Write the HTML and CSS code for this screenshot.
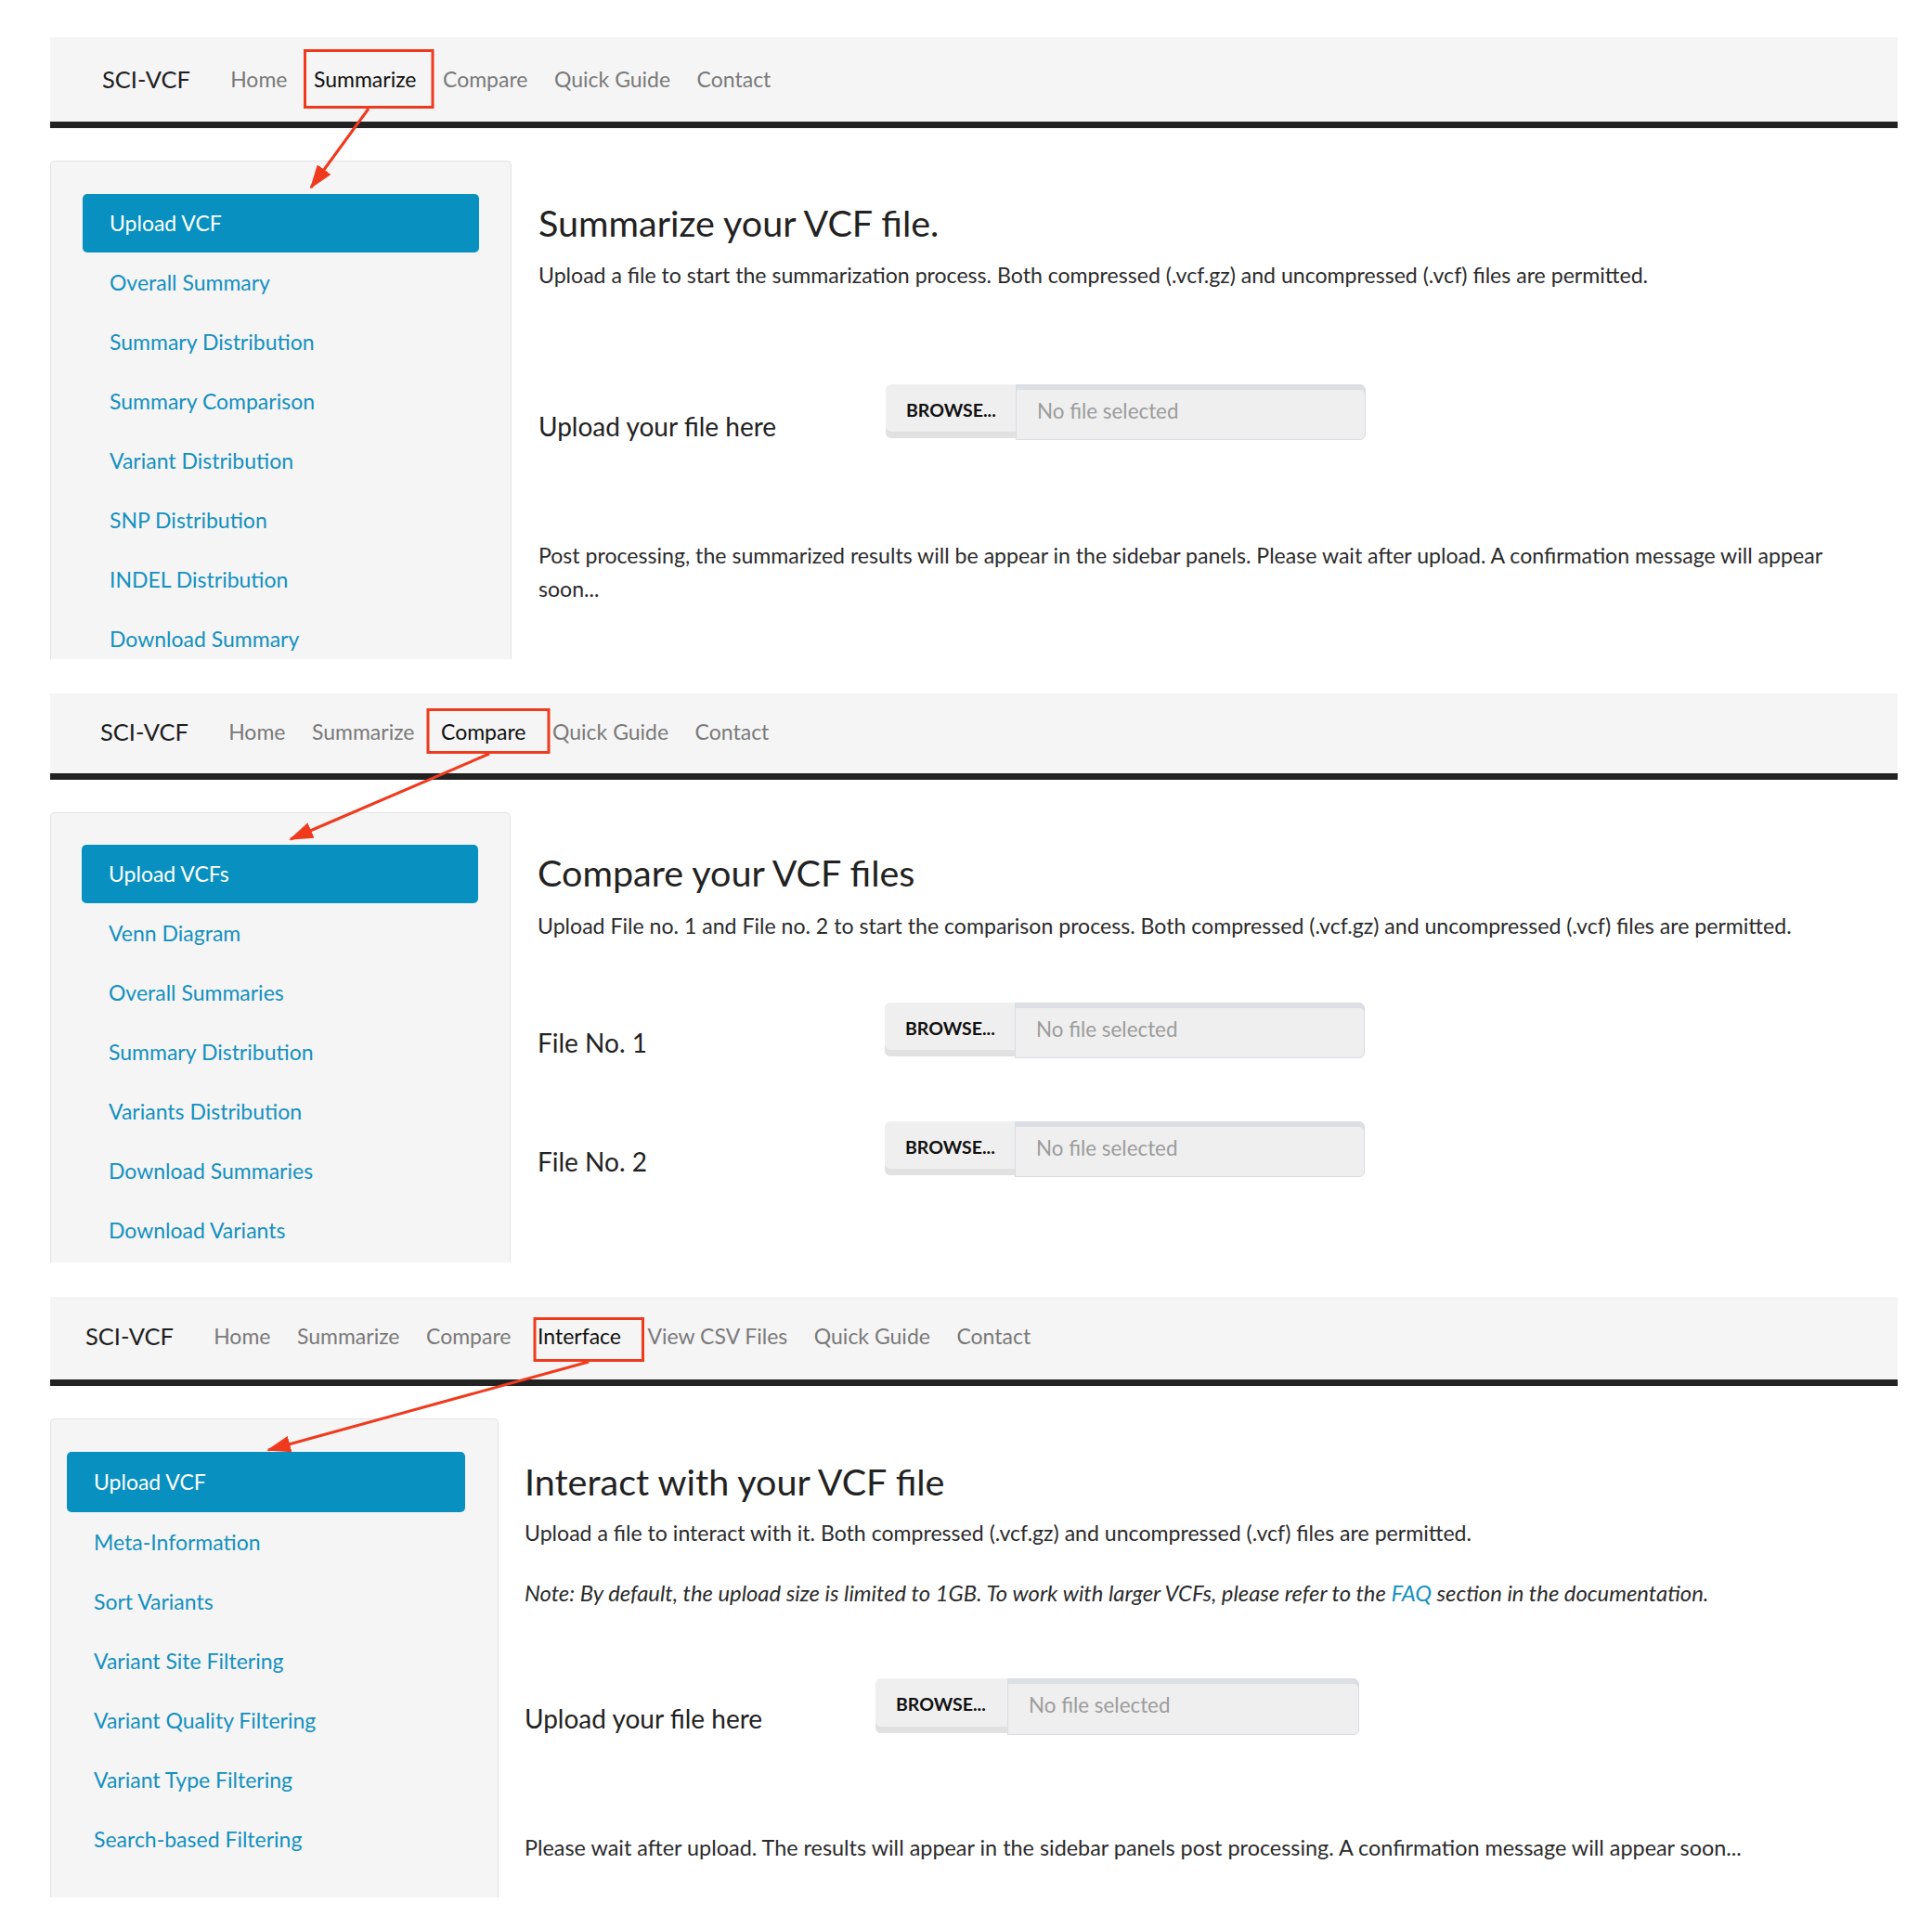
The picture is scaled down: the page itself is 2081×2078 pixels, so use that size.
FILE: index.html
```html
<!DOCTYPE html>
<html lang="en">
<head>
<meta charset="utf-8">
<title>SCI-VCF</title>
<link rel="stylesheet" href="styles.css">
</head>
<body>
<div class="page">

  <section class="panel panel-1">
    <nav class="navbar">
      <span class="brand">SCI-VCF</span>
      <ul class="nav">
        <li><a>Home</a></li>
        <li class="active"><a>Summarize</a></li>
        <li><a>Compare</a></li>
        <li><a>Quick Guide</a></li>
        <li><a>Contact</a></li>
      </ul>
    </nav>
    <div class="layout">
      <aside class="well">
        <ul class="pills">
          <li class="active"><a>Upload VCF</a></li>
          <li><a>Overall Summary</a></li>
          <li><a>Summary Distribution</a></li>
          <li><a>Summary Comparison</a></li>
          <li><a>Variant Distribution</a></li>
          <li><a>SNP Distribution</a></li>
          <li><a>INDEL Distribution</a></li>
          <li><a>Download Summary</a></li>
        </ul>
      </aside>
      <main class="main">
        <h1 class="title">Summarize your VCF file.</h1>
        <p class="text text-intro">Upload a file to start the summarization process. Both compressed (.vcf.gz) and uncompressed (.vcf) files are permitted.</p>
        <div class="upload-row row-first">
          <label class="upload-label">Upload your file here</label>
          <div class="file-input">
            <span class="browse">BROWSE...</span>
            <span class="filename">No file selected</span>
          </div>
        </div>
        <p class="text text-after">Post processing, the summarized results will be appear in the sidebar panels. Please wait after upload. A confirmation message will appear soon...</p>
      </main>
    </div>
  </section>

  <section class="panel panel-2">
    <nav class="navbar">
      <span class="brand">SCI-VCF</span>
      <ul class="nav">
        <li><a>Home</a></li>
        <li><a>Summarize</a></li>
        <li class="active"><a>Compare</a></li>
        <li><a>Quick Guide</a></li>
        <li><a>Contact</a></li>
      </ul>
    </nav>
    <div class="layout">
      <aside class="well">
        <ul class="pills">
          <li class="active"><a>Upload VCFs</a></li>
          <li><a>Venn Diagram</a></li>
          <li><a>Overall Summaries</a></li>
          <li><a>Summary Distribution</a></li>
          <li><a>Variants Distribution</a></li>
          <li><a>Download Summaries</a></li>
          <li><a>Download Variants</a></li>
        </ul>
      </aside>
      <main class="main">
        <h1 class="title">Compare your VCF files</h1>
        <p class="text text-intro">Upload File no. 1 and File no. 2 to start the comparison process. Both compressed (.vcf.gz) and uncompressed (.vcf) files are permitted.</p>
        <div class="upload-row row-first">
          <label class="upload-label">File No. 1</label>
          <div class="file-input">
            <span class="browse">BROWSE...</span>
            <span class="filename">No file selected</span>
          </div>
        </div>
        <div class="upload-row row-second">
          <label class="upload-label">File No. 2</label>
          <div class="file-input">
            <span class="browse">BROWSE...</span>
            <span class="filename">No file selected</span>
          </div>
        </div>
      </main>
    </div>
  </section>

  <section class="panel panel-3">
    <nav class="navbar">
      <span class="brand">SCI-VCF</span>
      <ul class="nav">
        <li><a>Home</a></li>
        <li><a>Summarize</a></li>
        <li><a>Compare</a></li>
        <li class="active"><a>Interface</a></li>
        <li><a>View CSV Files</a></li>
        <li><a>Quick Guide</a></li>
        <li><a>Contact</a></li>
      </ul>
    </nav>
    <div class="layout">
      <aside class="well">
        <ul class="pills">
          <li class="active"><a>Upload VCF</a></li>
          <li><a>Meta-Information</a></li>
          <li><a>Sort Variants</a></li>
          <li><a>Variant Site Filtering</a></li>
          <li><a>Variant Quality Filtering</a></li>
          <li><a>Variant Type Filtering</a></li>
          <li><a>Search-based Filtering</a></li>
        </ul>
      </aside>
      <main class="main">
        <h1 class="title">Interact with your VCF file</h1>
        <p class="text text-intro">Upload a file to interact with it. Both compressed (.vcf.gz) and uncompressed (.vcf) files are permitted.</p>
        <p class="text note"><em>Note: By default, the upload size is limited to 1GB. To work with larger VCFs, please refer to the <a class="link">FAQ</a> section in the documentation.</em></p>
        <div class="upload-row row-first">
          <label class="upload-label">Upload your file here</label>
          <div class="file-input">
            <span class="browse">BROWSE...</span>
            <span class="filename">No file selected</span>
          </div>
        </div>
        <p class="text text-after">Please wait after upload. The results will appear in the sidebar panels post processing. A confirmation message will appear soon...</p>
      </main>
    </div>
  </section>

  <svg class="annotations" width="2081" height="2078" viewBox="0 0 2081 2078" aria-hidden="true">
    <defs>
      <marker id="arrowhead" markerUnits="userSpaceOnUse" markerWidth="26" markerHeight="18" refX="24" refY="9" orient="auto">
        <path d="M0,0 L26,9 L0,18 Z" fill="#ef3a1e"/>
      </marker>
    </defs>
    <rect x="328.5" y="54.5" width="137.5" height="61" fill="none" stroke="#ef3a1e" stroke-width="3"/>
    <line x1="397" y1="117" x2="335" y2="202" stroke="#ef3a1e" stroke-width="3" marker-end="url(#arrowhead)"/>
    <rect x="461" y="764.5" width="130" height="46" fill="none" stroke="#ef3a1e" stroke-width="3"/>
    <line x1="527" y1="812" x2="313" y2="904" stroke="#ef3a1e" stroke-width="3" marker-end="url(#arrowhead)"/>
    <rect x="576" y="1420.5" width="116.5" height="45" fill="none" stroke="#ef3a1e" stroke-width="3"/>
    <line x1="634" y1="1467" x2="289" y2="1562" stroke="#ef3a1e" stroke-width="3" marker-end="url(#arrowhead)"/>
  </svg>
</div>
</body>
</html>
```
FILE: styles.css
```css
* { box-sizing: border-box; }

html, body { margin: 0; padding: 0; background: #ffffff; }

body {
  font-family: Lato, "Noto Sans", "Liberation Sans", sans-serif;
  color: #333333;
}

.page {
  position: relative;
  width: 2081px;
  height: 2078px;
  padding: 40px 0 0 54px;
  overflow: hidden;
}

.panel { width: 1990px; }
.panel + .panel { margin-top: 37px; }

/* ---------- navbar ---------- */
.navbar {
  display: flex;
  align-items: center;
  background: #f5f5f5;
  border-bottom: 7px solid #222222;
}
.panel-1 .navbar { height: 98px; padding: 0 0 2px 56px; }
.panel-2 .navbar { height: 93px; padding: 0 0 5px 54px; }
.panel-3 .navbar { height: 96px; padding: 0 0 5px 38px; }

.brand {
  font-size: 25.5px;
  color: #1e1e1e;
  margin-right: 29px;
}

.nav {
  display: flex;
  list-style: none;
  margin: 0;
  padding: 0;
}
.nav a {
  display: block;
  padding: 0 14.25px;
  font-size: 23px;
  color: #7a7a7a;
}
.nav .active a { color: #111111; }

/* ---------- layout ---------- */
.layout {
  display: flex;
  align-items: flex-start;
  margin-top: 35px;
  gap: 29px;
}
.panel-3 .layout { gap: 28px; }

.well {
  flex: none;
  background: #f5f5f5;
  border: 1px solid #e3e3e3;
  border-bottom: none;
  border-radius: 5px 5px 0 0;
  overflow: hidden;
}
.panel-1 .well { width: 497px; height: 537px; padding: 35px 34px 0 34px; }
.panel-2 .well { width: 496px; height: 485px; padding: 34px 34px 0 33px; }
.panel-3 .well { width: 483px; height: 516px; padding: 35px 35px 0 17px; }

.pills {
  list-style: none;
  margin: 0;
  padding: 0;
}
.pills li + li { margin-top: 1px; }
.pills a {
  display: block;
  height: 63px;
  line-height: 63px;
  padding: 0 29px;
  font-size: 23px;
  color: #1390c0;
  border-radius: 5px;
  white-space: nowrap;
}
.panel-3 .pills .active a { height: 65px; line-height: 65px; }
.pills .active a {
  background: #0790c0;
  color: #ffffff;
}

/* ---------- main ---------- */
.main { width: 1430px; }

.title {
  font-size: 39.5px;
  font-weight: 400;
  line-height: 47px;
  color: #222222;
  margin: 43px 0 0;
}
.panel-2 .title { margin-top: 41px; }
.panel-3 .title { margin-top: 44px; }

.text {
  font-size: 23.1px;
  line-height: 36px;
  color: #2b2b2b;
  margin: 0;
}
.text-intro { margin-top: 15px; }
.panel-2 .text-intro { margin-top: 16px; }
.panel-3 .text-intro { margin-top: 14px; }
.note { margin-top: 29px; font-size: 23.8px; }
.link { color: #1390c0; }
.text-after { margin-top: 103px; }
.panel-3 .text-after { font-size: 23.4px; }

.upload-row {
  display: flex;
  align-items: flex-start;
}
.panel-1 .row-first { margin-top: 100px; }
.panel-2 .row-first { margin-top: 65px; }
.panel-2 .row-second { margin-top: 67px; }
.panel-3 .row-first { margin-top: 74px; }

.upload-label {
  flex: none;
  width: 374px;
  margin-top: 25px;
  font-size: 28px;
  line-height: 36px;
  color: #222222;
}
.panel-1 .upload-label { margin-top: 27px; }
.panel-3 .upload-label { width: 378px; }

.file-input { display: flex; align-items: flex-start; }

.browse {
  width: 140px;
  height: 58px;
  padding: 16px 0 0 22px;
  background: #efefef;
  border-radius: 6px 0 0 6px;
  box-shadow: inset 0 -7px 0 #e1e1e1;
  font-size: 19.5px;
  line-height: 24px;
  font-weight: 700;
  color: #111111;
}
.filename {
  width: 377px;
  height: 60px;
  padding: 15px 0 0 22px;
  background: #efefef;
  border: 1px solid #d8dde3;
  border-radius: 0 6px 6px 0;
  box-shadow: inset 0 5px 0 #dcdfe3;
  font-size: 22.4px;
  line-height: 26px;
  color: #9c9c9c;
}
.panel-3 .browse { width: 142px; height: 59px; }
.panel-3 .filename { width: 379px; height: 61px; }

/* ---------- annotations ---------- */
.annotations {
  position: absolute;
  left: 0;
  top: 0;
  pointer-events: none;
}
```
